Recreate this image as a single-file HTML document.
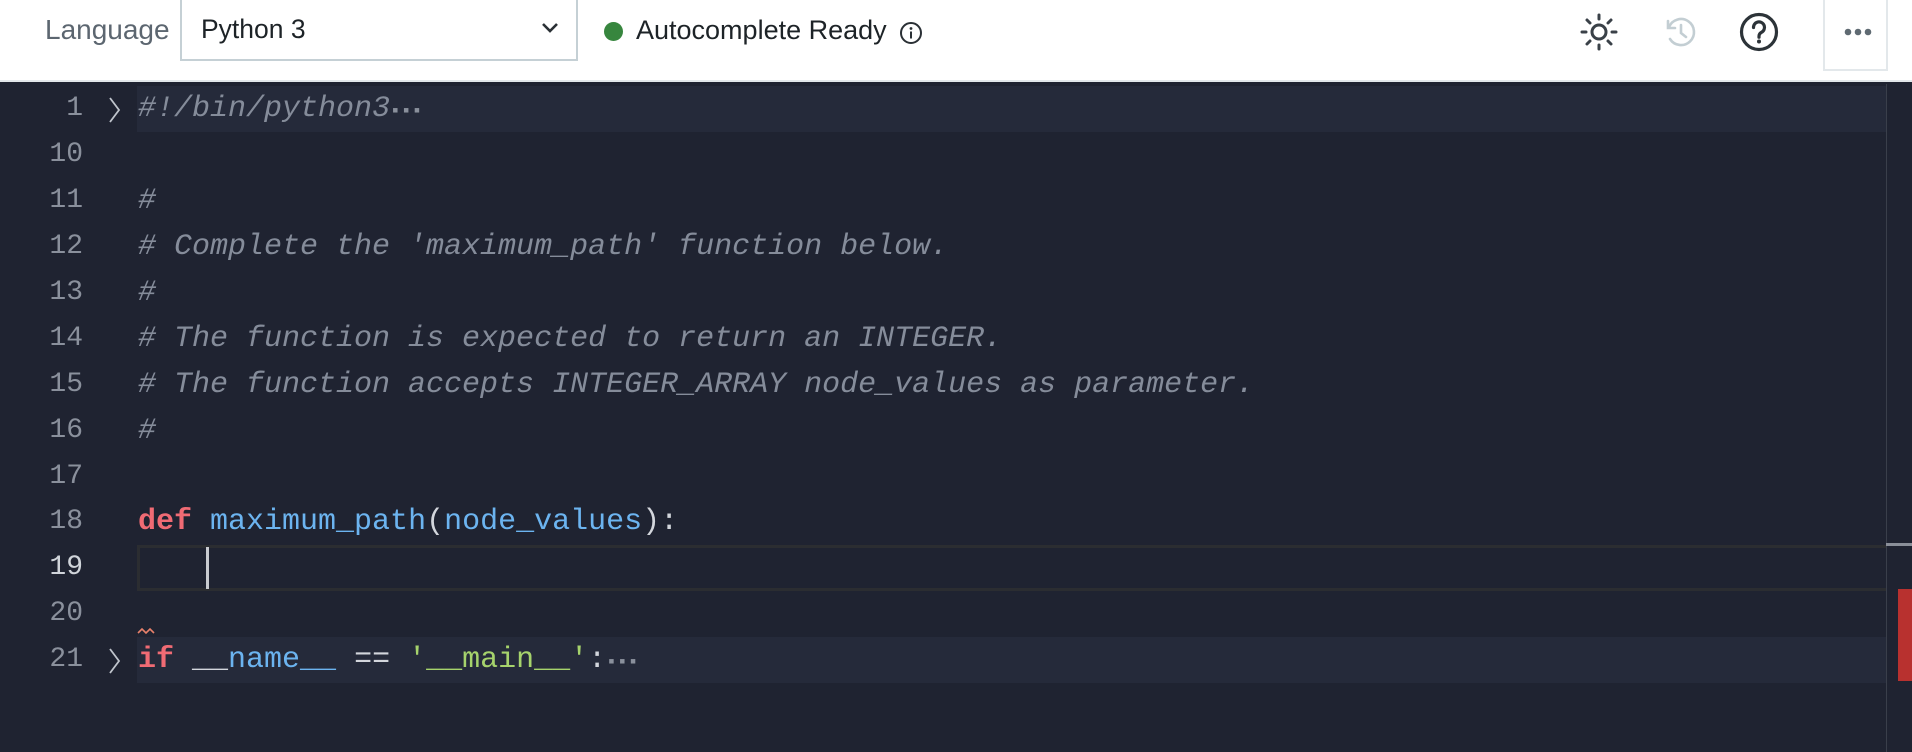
<!DOCTYPE html>
<html><head><meta charset="utf-8"><style>
*{margin:0;padding:0;box-sizing:border-box}
body{width:1912px;height:752px;overflow:hidden;background:#1f2331;font-family:"Liberation Sans",sans-serif;position:relative}
.hdr{position:absolute;left:0;top:0;width:1912px;height:82px;background:#fff;border-bottom:2px solid #e3e8eb}
.lang{position:absolute;left:45px;top:14px;font-size:28px;color:#5c6670}
.sel{position:absolute;left:180px;top:-2px;width:398px;height:63px;border:2px solid #c5d0d5;border-top:none;background:#fff}
.sel span{position:absolute;left:19px;top:16px;font-size:26.5px;color:#1d2327}
.dot{position:absolute;left:604px;top:22px;width:19px;height:19px;border-radius:50%;background:#37863e}
.ac{position:absolute;left:636px;top:15px;font-size:27px;color:#1d2327}
.more{position:absolute;left:1823px;top:-2px;width:65px;height:73px;border:2px solid #e3e8eb;border-top:none}
.ed{position:absolute;left:0;top:84px;width:1912px;height:668px}
.row{position:absolute;left:0;height:46px;width:1886px;font-family:"Liberation Mono",monospace;font-size:30px;line-height:46px;white-space:pre}
.hl{background:#252a3a}
.ln{position:absolute;right:1803px;color:#8a909c;font-family:"Liberation Mono",monospace;font-size:28px;text-align:right;width:80px}
.code{position:absolute;left:138px;color:#d3d6dc}
.c{color:#858c9a;font-style:italic}
.k{color:#f06b74;font-weight:bold}
.b{color:#6cb4f0}
.g{color:#a6d36c}
.arrow{position:absolute;left:108px;top:11px}
</style></head><body>
<div class="hdr">
<div class="lang">Language</div>
<div class="sel"><span>Python 3</span>
<svg style="position:absolute;left:359px;top:24px" width="18" height="12" viewBox="0 0 18 12"><path d="M2 2l7 7 7-7" fill="none" stroke="#2a3035" stroke-width="2.6"/></svg></div>
<div class="dot"></div>
<div class="ac">Autocomplete Ready</div>
<svg style="position:absolute;left:899px;top:21px" width="24" height="24" viewBox="0 0 24 24"><circle cx="12" cy="12" r="10" fill="none" stroke="#2a3035" stroke-width="2"/><circle cx="12" cy="7.5" r="1.4" fill="#2a3035"/><path d="M12 10.5v7" stroke="#2a3035" stroke-width="2"/></svg>
<svg style="position:absolute;left:1579px;top:12px" width="40" height="40" viewBox="0 0 40 40" stroke="#3a4148" stroke-width="3" stroke-linecap="round" fill="none"><circle cx="20" cy="20" r="7"/><path d="M20 3v4M20 33v4M3 20h4M33 20h4M8 8l3 3M29 29l3 3M8 32l3-3M29 11l3-3"/></svg>
<svg style="position:absolute;left:1664px;top:15px" width="34" height="34" viewBox="0 0 34 34" stroke="#c3ced3" stroke-width="2.6" stroke-linecap="round" fill="none"><path d="M5 12A13 13 0 1 1 6 24"/><path d="M4 6v7h7"/><path d="M17 10v8l5 4"/></svg>
<svg style="position:absolute;left:1739px;top:12px" width="40" height="40" viewBox="0 0 40 40"><circle cx="20" cy="20" r="17.5" fill="none" stroke="#2c3338" stroke-width="3.2"/><path d="M14.5 15.5a5.5 5.5 0 1 1 8 4.8c-1.6.9-2.5 2-2.5 3.9v1" fill="none" stroke="#2c3338" stroke-width="3.2" stroke-linecap="round"/><circle cx="20" cy="29.5" r="2" fill="#2c3338"/></svg>
<div class="more"><svg style="position:absolute;left:18px;top:29px" width="30" height="10"><circle cx="5" cy="5" r="3.3" fill="#5f6a72"/><circle cx="15" cy="5" r="3.3" fill="#5f6a72"/><circle cx="25" cy="5" r="3.3" fill="#5f6a72"/></svg></div>
</div>
<div class="ed">
<div class="row" style="top:2px"><div class="hl" style="position:absolute;left:137px;right:0;top:0;bottom:0"></div><span class="ln">1</span><svg class="arrow" width="14" height="26"><path d="M2 1l9 12-9 12" fill="none" stroke="#bfc4cc" stroke-width="1.8"/></svg><span class="code c">#!/bin/python3<span style="font-style:normal;color:#8a909c;font-size:18px">▪▪▪</span></span></div>
<div class="row" style="top:48px"><span class="ln">10</span></div>
<div class="row" style="top:94px"><span class="ln">11</span><span class="code c">#</span></div>
<div class="row" style="top:140px"><span class="ln">12</span><span class="code c"># Complete the 'maximum_path' function below.</span></div>
<div class="row" style="top:186px"><span class="ln">13</span><span class="code c">#</span></div>
<div class="row" style="top:232px"><span class="ln">14</span><span class="code c"># The function is expected to return an INTEGER.</span></div>
<div class="row" style="top:278px"><span class="ln">15</span><span class="code c"># The function accepts INTEGER_ARRAY node_values as parameter.</span></div>
<div class="row" style="top:324px"><span class="ln">16</span><span class="code c">#</span></div>
<div class="row" style="top:370px"><span class="ln">17</span></div>
<div class="row" style="top:415px"><span class="ln">18</span><span class="code"><span class="k">def</span> <span class="b">maximum_path</span>(<span class="b">node_values</span>):</span></div>
<div class="row" style="top:461px"><div style="position:absolute;left:137px;right:0;top:0;bottom:0;border:3px solid #2b2d31;border-right:none"></div><span class="ln" style="color:#d0d4da">19</span><div style="position:absolute;left:206px;top:2px;width:3px;height:42px;background:#c8cbd0"></div></div>
<div class="row" style="top:507px"><span class="ln">20</span></div>
<div class="row" style="top:553px"><div class="hl" style="position:absolute;left:137px;right:0;top:0;bottom:0"></div><span class="ln">21</span><svg class="arrow" width="14" height="26"><path d="M2 1l9 12-9 12" fill="none" stroke="#bfc4cc" stroke-width="1.8"/></svg><svg style="position:absolute;left:137px;top:-10px" width="18" height="8"><path d="M1 6l4-4 4 4 4-4 4 4" fill="none" stroke="#e8816b" stroke-width="1.6"/></svg><span class="code"><span class="k">if</span> <span style="color:#d3d6dc">__</span><span class="b">name__</span> == <span class="g">'__main__'</span>:<span style="color:#8a909c;font-size:18px">▪▪▪</span></span></div>
<div style="position:absolute;left:1886px;top:0;width:1px;height:668px;background:#3a3f4b"></div>
<div style="position:absolute;left:1886px;top:459px;width:26px;height:3px;background:#8a8f99"></div>
<div style="position:absolute;left:1898px;top:505px;width:14px;height:92px;background:#b8312f"></div>
</div>
</body></html>
